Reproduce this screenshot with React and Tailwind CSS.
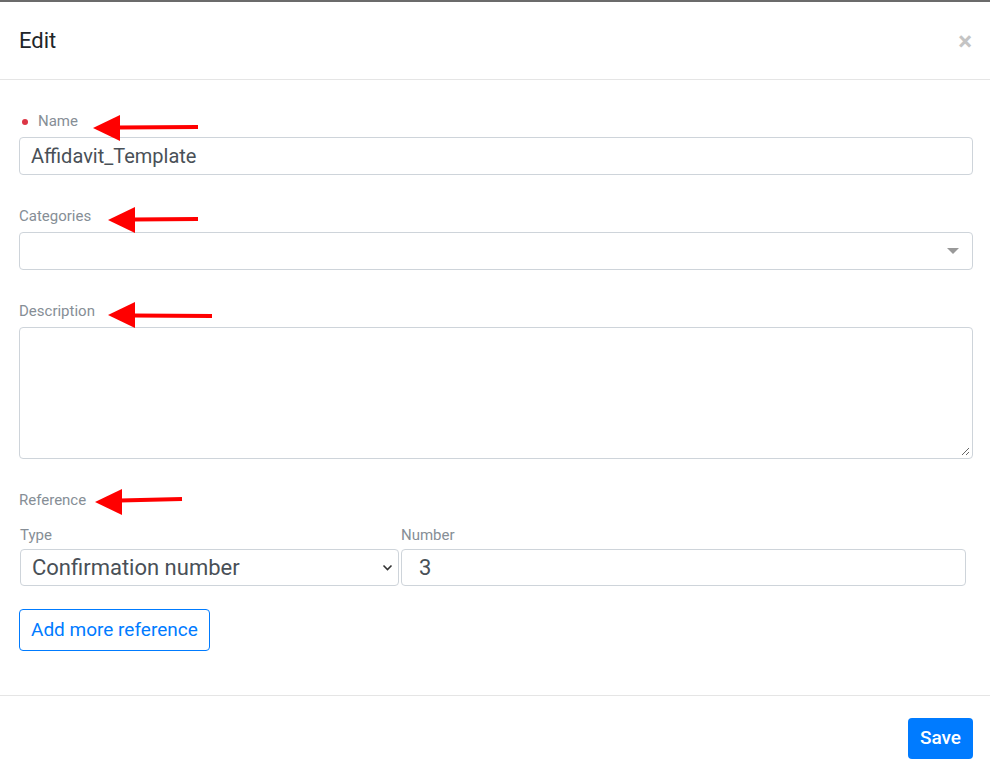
import React from "react";

const Arrow = ({ tipX, tipY, tailX, tailY, headBack = 27, headHalf = 13 }) => (
  <g>
    <line x1={tipX + headBack - 2} y1={(tipY + tailY) / 2} x2={tailX} y2={tailY} stroke="#ff0000" strokeWidth="4" />
    <polygon
      points={`${tipX},${tipY} ${tipX + headBack},${tipY - headHalf} ${tipX + headBack},${tipY + headHalf}`}
      fill="#ff0000"
    />
  </g>
);

const Label = ({ children, required }) => (
  <div className="flex items-center h-[21px] text-[15px] text-[#868e96]">
    {required && <span className="w-[6px] h-[6px] rounded-full bg-[#dc3545] ml-[3px] mr-[10px]" />}
    {children}
  </div>
);

const App = () => {
  return (
    <div
      className="relative w-[990px] h-[780px] bg-white border-t-2 border-[#6b6b6b] overflow-hidden"
      style={{ fontFamily: "Roboto, 'Liberation Sans', sans-serif" }}
    >
      <div className="h-[78px] flex items-center justify-between pl-[19px] pr-[18px] border-b border-[#e5e5e5]">
        <h2 className="text-[22px] text-[#212529]">Edit</h2>
        <span className="text-[26px] font-bold leading-none text-[#c4c4c4]">×</span>
      </div>

      <div className="pl-[19px] pr-[17px] pt-[31px]">
        <Label required>Name</Label>
        <input
          readOnly
          value="Affidavit_Template"
          className="mt-[5px] w-full h-[38px] px-[11px] border border-[#ced4da] rounded text-[20px] text-[#495057] outline-none"
        />

        <div className="mt-[31px]">
          <Label>Categories</Label>
          <div className="mt-[5px] w-full h-[38px] border border-[#ced4da] rounded flex items-center justify-end pr-[13px]">
            <svg width="12" height="7" viewBox="0 0 12 7">
              <polygon points="0,0 12,0 6,6" fill="#999" />
            </svg>
          </div>
        </div>

        <div className="mt-[31px]">
          <Label>Description</Label>
          <div className="relative mt-[5px] w-full h-[132px] border border-[#ced4da] rounded">
            <svg className="absolute right-[2px] bottom-[2px]" width="9" height="9" viewBox="0 0 9 9">
              <line x1="8" y1="1" x2="1" y2="8" stroke="#666" strokeWidth="1" />
              <line x1="8" y1="5" x2="5" y2="8" stroke="#666" strokeWidth="1" />
            </svg>
          </div>
        </div>

        <div className="mt-[31px]">
          <Label>Reference</Label>
          <div className="mt-[14px] flex gap-[2px] ml-px mr-[7px]">
            <div className="w-[379px]">
              <div className="h-[20px] text-[15px] text-[#868e96] flex items-center">Type</div>
              <div className="mt-[4px] h-[37px] border border-[#ced4da] rounded flex items-center justify-between pl-[11px] pr-[5px] text-[22px] text-[#495057]">
                <span>Confirmation number</span>
                <svg width="11" height="7" viewBox="0 0 11 7">
                  <polyline points="1.5,1.5 5.5,5.5 9.5,1.5" fill="none" stroke="#333" strokeWidth="1.6" />
                </svg>
              </div>
            </div>
            <div className="flex-1">
              <div className="h-[20px] text-[15px] text-[#868e96] flex items-center">Number</div>
              <div className="mt-[4px] h-[37px] border border-[#ced4da] rounded flex items-center pl-[17px] text-[22px] text-[#495057]">
                3
              </div>
            </div>
          </div>
        </div>

        <button className="mt-[23px] h-[42px] px-[11px] border border-[#007bff] rounded text-[19px] text-[#007bff] bg-white">
          Add more reference
        </button>
      </div>

      <div className="mt-[44px] border-t border-[#e5e5e5] flex justify-end pl-[19px] pr-[17px] pt-[22px]">
        <button className="h-[41px] px-[12px] rounded bg-[#007bff] text-white text-[19px] font-medium">Save</button>
      </div>

      <svg className="absolute inset-0 pointer-events-none" width="990" height="780">
        <Arrow tipX={93} tipY={126} tailX={198} tailY={125} />
        <Arrow tipX={108} tipY={218} tailX={198} tailY={217} />
        <Arrow tipX={108} tipY={313} tailX={212} tailY={314} />
        <Arrow tipX={95} tipY={500} tailX={182} tailY={497} />
      </svg>
    </div>
  );
};

export default App;
